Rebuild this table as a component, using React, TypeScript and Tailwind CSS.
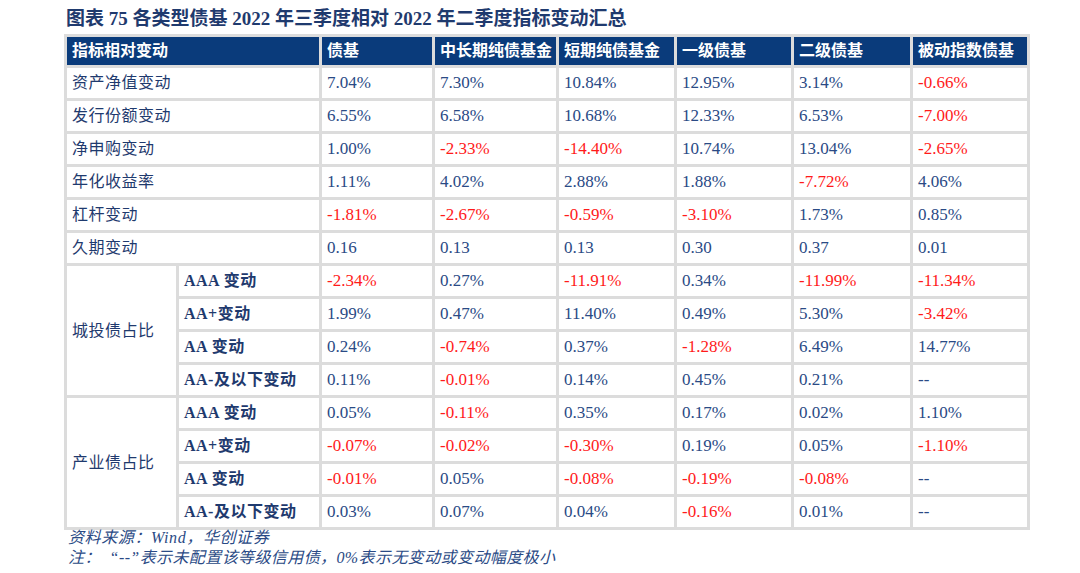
const FONT = "font-['Liberation_Serif','Noto_Sans_CJK_SC',serif]";

const COLUMNS = ["债基", "中长期纯债基金", "短期纯债基金", "一级债基", "二级债基", "被动指数债基"];

const TOP_ROWS: [string, string[]][] = [
  ["资产净值变动", ["7.04%", "7.30%", "10.84%", "12.95%", "3.14%", "-0.66%"]],
  ["发行份额变动", ["6.55%", "6.58%", "10.68%", "12.33%", "6.53%", "-7.00%"]],
  ["净申购变动", ["1.00%", "-2.33%", "-14.40%", "10.74%", "13.04%", "-2.65%"]],
  ["年化收益率", ["1.11%", "4.02%", "2.88%", "1.88%", "-7.72%", "4.06%"]],
  ["杠杆变动", ["-1.81%", "-2.67%", "-0.59%", "-3.10%", "1.73%", "0.85%"]],
  ["久期变动", ["0.16", "0.13", "0.13", "0.30", "0.37", "0.01"]],
];

const GROUPS: { name: string; rows: [string, string[]][] }[] = [
  {
    name: "城投债占比",
    rows: [
      ["AAA 变动", ["-2.34%", "0.27%", "-11.91%", "0.34%", "-11.99%", "-11.34%"]],
      ["AA+变动", ["1.99%", "0.47%", "11.40%", "0.49%", "5.30%", "-3.42%"]],
      ["AA 变动", ["0.24%", "-0.74%", "0.37%", "-1.28%", "6.49%", "14.77%"]],
      ["AA-及以下变动", ["0.11%", "-0.01%", "0.14%", "0.45%", "0.21%", "--"]],
    ],
  },
  {
    name: "产业债占比",
    rows: [
      ["AAA 变动", ["0.05%", "-0.11%", "0.35%", "0.17%", "0.02%", "1.10%"]],
      ["AA+变动", ["-0.07%", "-0.02%", "-0.30%", "0.19%", "0.05%", "-1.10%"]],
      ["AA 变动", ["-0.01%", "0.05%", "-0.08%", "-0.19%", "-0.08%", "--"]],
      ["AA-及以下变动", ["0.03%", "0.07%", "0.04%", "-0.16%", "0.01%", "--"]],
    ],
  },
];

const cell = "border-[3px] border-[#dcdcdc] px-[5px] align-middle";

const ValueCell = ({ v }: { v: string }) => {
  const neg = v.startsWith("-") && v !== "--";
  return (
    <td className={`${cell} text-[17px] ${neg ? "text-[#ff1a1a]" : "text-[#2a4a85]"}`}>
      {v}
    </td>
  );
};

export default function App() {
  return (
    <div className={`w-[1080px] h-[573px] bg-white pl-[64px] pt-[6px] ${FONT}`}>
      <h1 className="pl-[2px] text-[19px] font-bold text-[#1f3a6e] leading-[26px]">
        图表 75 各类型债基 2022 年三季度相对 2022 年二季度指标变动汇总
      </h1>
      <table className="mt-[2px] w-[963px] table-fixed border-collapse border-[3px] border-[#dcdcdc]">
        <colgroup>
          <col className="w-[112px]" />
          <col className="w-[143px]" />
          <col className="w-[113px]" />
          <col className="w-[124px]" />
          <col className="w-[118px]" />
          <col className="w-[117px]" />
          <col className="w-[119px]" />
          <col className="w-[117px]" />
        </colgroup>
        <thead>
          <tr className="h-[31px] bg-[#0a3b7b] text-left text-white text-[16px] font-bold">
            <th colSpan={2} className={`${cell} font-bold`}>
              指标相对变动
            </th>
            {COLUMNS.map((c) => (
              <th key={c} className={`${cell} font-bold whitespace-nowrap`}>
                {c}
              </th>
            ))}
          </tr>
        </thead>
        <tbody>
          {TOP_ROWS.map(([label, vals]) => (
            <tr key={label} className="h-[33px]">
              <td colSpan={2} className={`${cell} text-[16px] text-[#1f3a6e] tracking-[0.5px]`}>
                {label}
              </td>
              {vals.map((v, i) => (
                <ValueCell key={i} v={v} />
              ))}
            </tr>
          ))}
          {GROUPS.map((g) =>
            g.rows.map(([label, vals], ri) => (
              <tr key={g.name + label} className="h-[33px]">
                {ri === 0 && (
                  <td rowSpan={4} className={`${cell} text-[16px] text-[#1f3a6e] tracking-[0.5px]`}>
                    {g.name}
                  </td>
                )}
                <td className={`${cell} text-[16px] font-bold text-[#1f3a6e] whitespace-nowrap tracking-[0.5px]`}>
                  {label}
                </td>
                {vals.map((v, i) => (
                  <ValueCell key={i} v={v} />
                ))}
              </tr>
            ))
          )}
        </tbody>
      </table>
      <div className="-mt-[2px] pl-[4px] text-[16px] italic text-[#2a4a85] leading-[20px]">
        <p className="tracking-[0.6px]">资料来源：Wind，华创证券</p>
        <p className="tracking-[0.4px]">注：&nbsp; “--”表示未配置该等级信用债，0%表示无变动或变动幅度极小</p>
      </div>
    </div>
  );
}
